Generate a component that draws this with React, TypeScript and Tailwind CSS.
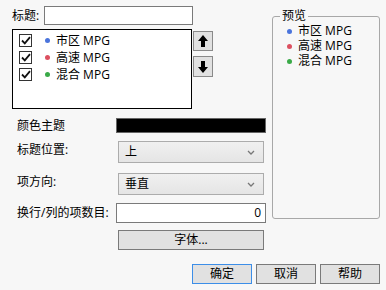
import React from "react";

const font = { fontFamily: '"Open Sans", "Noto Sans CJK SC", sans-serif' };

const items = [
  { label: "市区 MPG", color: "bg-[#4a74dc]" },
  { label: "高速 MPG", color: "bg-[#dc5060]" },
  { label: "混合 MPG", color: "bg-[#3aaa48]" },
];

function Check() {
  return (
    <span className="w-[13px] h-[13px] border border-[#333] bg-white flex items-center justify-center">
      <svg width="10" height="9" viewBox="0 0 10 9">
        <path d="M1 4.5 L3.8 7.3 L9 1.2" stroke="#111" strokeWidth="1.8" fill="none" />
      </svg>
    </span>
  );
}

function Chevron() {
  return (
    <svg width="8" height="5" viewBox="0 0 8 5">
      <path d="M1 1 L4 4 L7 1" stroke="#777" strokeWidth="1.3" fill="none" />
    </svg>
  );
}

function Arrow({ up }: { up?: boolean }) {
  return (
    <svg width="12" height="14" viewBox="0 0 12 14" style={{ transform: up ? undefined : "rotate(180deg)" }}>
      <path d="M6 1 L11 7 L8 7 L8 13 L4 13 L4 7 L1 7 Z" fill="#000" />
    </svg>
  );
}

export default function App() {
  return (
    <div className="w-[386px] h-[290px] bg-[#f7f7f7] text-[12px] text-black leading-none overflow-hidden" style={font}>
      <div className="flex pt-[6px]">
        <div className="flex flex-col w-[266px] pl-[12px]">
          <div className="flex items-center h-[19px]">
            <span className="w-[32px]">标题:</span>
            <div className="w-[149px] h-[19px] border border-[#7a7a7a] bg-white" />
          </div>
          <div className="flex mt-[4px]">
            <div className="w-[180px] h-[80px] border border-black bg-white pt-[4px] pl-[6px] flex flex-col gap-[4px]">
              {items.map((it) => (
                <div key={it.label} className="flex items-center h-[13px]">
                  <Check />
                  <span className={`w-[5px] h-[5px] rounded-full ml-[13px] ${it.color}`} />
                  <span className="ml-[6px]">{it.label}</span>
                </div>
              ))}
            </div>
            <div className="flex flex-col ml-[1px] mt-[2px] gap-[5px]">
              <div className="w-[20px] h-[20px] border border-[#8a8a8a] bg-[#e1e1e1] flex items-center justify-center">
                <Arrow up />
              </div>
              <div className="w-[20px] h-[21px] border border-[#8a8a8a] bg-[#e1e1e1] flex items-center justify-center">
                <Arrow />
              </div>
            </div>
          </div>
          <div className="flex items-center mt-[9px] h-[15px] pl-[5px]">
            <span className="w-[99px]">颜色主题</span>
            <div className="w-[150px] h-[15px] bg-black border border-[#666]" />
          </div>
          <div className="flex items-center mt-[8px] h-[22px] pl-[5px]">
            <span className="w-[101px] -mt-[5px]">标题位置:</span>
            <div className="w-[146px] h-[22px] border border-[#acacac] bg-gradient-to-b from-[#f0f0f0] to-[#e5e5e5] flex items-center justify-between pl-[6px] pr-[8px]">
              <span>上</span>
              <Chevron />
            </div>
          </div>
          <div className="flex items-center mt-[10px] h-[22px] pl-[5px]">
            <span className="w-[101px] -mt-[5px]">项方向:</span>
            <div className="w-[146px] h-[22px] border border-[#acacac] bg-gradient-to-b from-[#f0f0f0] to-[#e5e5e5] flex items-center justify-between pl-[6px] pr-[8px]">
              <span>垂直</span>
              <Chevron />
            </div>
          </div>
          <div className="flex items-center mt-[8px] h-[20px] pl-[5px]">
            <span className="w-[99px]">换行/列的项数目:</span>
            <div className="w-[150px] h-[20px] border border-[#7a7a7a] bg-white flex items-center justify-end pr-[4px]">
              0
            </div>
          </div>
          <div className="flex mt-[7px] pl-[106px]">
            <div className="w-[146px] h-[20px] border border-[#7a7a7a] bg-[#e1e1e1] flex items-center justify-center">
              字体...
            </div>
          </div>
        </div>
        <fieldset className="ml-[6px] w-[108px] h-[209px] border border-[#a8a8a8] rounded-[3px] px-[5px] mt-[4px]">
          <legend className="px-[2px] ml-[2px]">预览</legend>
          <div className="flex flex-col gap-[1px] mt-[2px] pl-[9px]">
            {items.map((it) => (
              <div key={it.label} className="flex items-center h-[14px] leading-[14px]">
                <span className={`w-[5px] h-[5px] rounded-full ${it.color}`} />
                <span className="ml-[6px]">{it.label}</span>
              </div>
            ))}
          </div>
        </fieldset>
      </div>
      <div className="flex justify-end gap-[4px] pr-[6px] mt-[14px]">
        <div className="w-[60px] h-[20px] border border-[#3c8ee8] bg-[#e1e1e1] flex items-center justify-center">确定</div>
        <div className="w-[60px] h-[20px] border border-[#7a7a7a] bg-[#e1e1e1] flex items-center justify-center">取消</div>
        <div className="w-[60px] h-[20px] border border-[#7a7a7a] bg-[#e1e1e1] flex items-center justify-center">帮助</div>
      </div>
    </div>
  );
}
